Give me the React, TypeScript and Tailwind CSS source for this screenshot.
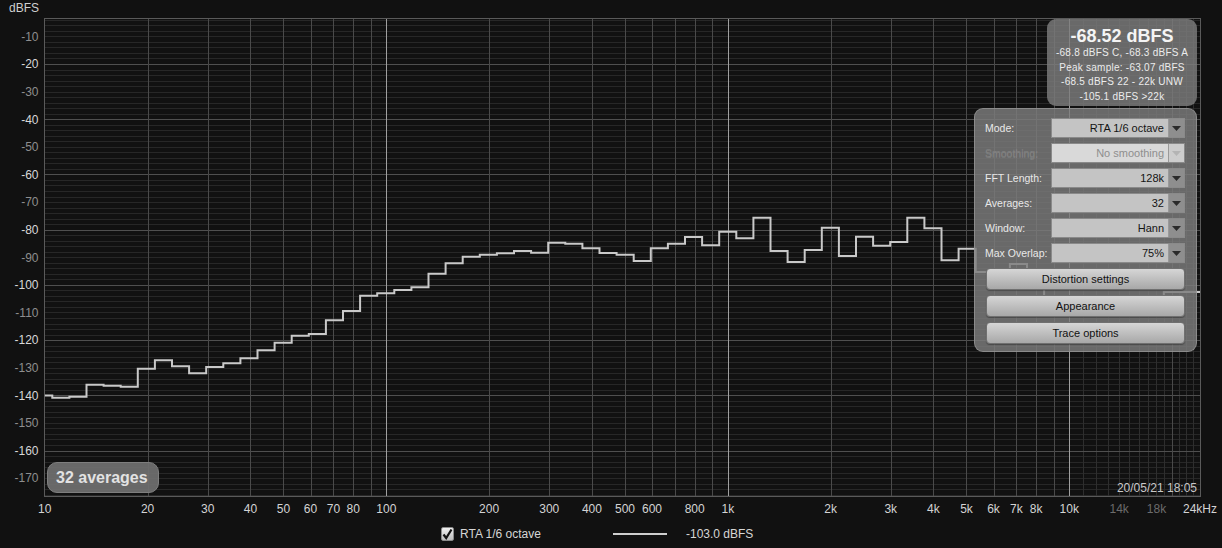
import React from "react";

const X0 = 44.8;
const DEC = 341.5;
const xf = (f: number) => X0 + DEC * Math.log10(f / 10);
const yd = (db: number) => 64 + (-20 - db) * 2.761;
const cr = (v: number) => Math.round(v) + 0.5;

const LEFT = 44.5;
const RIGHT = 1200.5;
const TOP = 18.5;
const BOTTOM = 496.5;

const bands = [
  395.5, 397.7, 396.7, 384.7, 385.7, 386.7, 368.7, 360.2, 366.3, 373.2, 367, 363.3, 358.3, 350.3, 342.7,
  335.7, 334, 320.3, 311, 295.7, 293.3, 290, 287.3, 273.7, 263.3, 256.7, 254.7, 253.3, 251, 252.7, 242.7,
  243.7, 248.3, 253, 254.7, 261, 248.3, 243.7, 237, 245.3, 231.7, 238.3, 217.7, 251, 262, 250, 227.7, 256,
  236.7, 245.7, 242, 217.7, 228.3, 260.3, 248.7, 272, 271, 264, 276, 298, 301, 299, 302, 300, 299, 301,
  292, 292, 292,
];

function tracePath() {
  const edges: number[] = [44.8];
  for (let i = 0; i < bands.length; i++) edges.push(Math.min(52.3 + 17.1 * i, 1200));
  let d = `M ${edges[0]} ${bands[0]}`;
  for (let i = 0; i < bands.length; i++) {
    d += ` H ${edges[i + 1].toFixed(1)}`;
    if (i + 1 < bands.length) d += ` V ${bands[i + 1]}`;
  }
  return d;
}

const mediumFreqs = [
  20, 30, 40, 50, 60, 70, 80, 90, 200, 300, 400, 500, 600, 700, 800, 900, 2000, 3000, 4000, 5000, 6000,
  7000, 8000, 9000, 20000,
];
const majorFreqs = [100, 1000, 10000];
const minorFreqs = [11000, 12000, 13000, 14000, 15000, 16000, 17000, 18000, 19000, 21000, 22000, 23000];

const xLabels: [number, string, boolean][] = [
  [10, "10", false],
  [20, "20", false],
  [30, "30", false],
  [40, "40", false],
  [50, "50", false],
  [60, "60", false],
  [70, "70", false],
  [80, "80", false],
  [100, "100", false],
  [200, "200", false],
  [300, "300", false],
  [400, "400", false],
  [500, "500", false],
  [600, "600", false],
  [800, "800", false],
  [1000, "1k", false],
  [2000, "2k", false],
  [3000, "3k", false],
  [4000, "4k", false],
  [5000, "5k", false],
  [6000, "6k", false],
  [7000, "7k", false],
  [8000, "8k", false],
  [10000, "10k", false],
  [14000, "14k", true],
  [18000, "18k", true],
];

function Chart() {
  const minorH: number[] = [];
  for (let db = -4; db >= -176; db -= 2) minorH.push(db);
  const majorH = [-20, -40, -60, -80, -100, -120, -140, -160];
  const yLabels: number[] = [];
  for (let db = -10; db >= -170; db -= 10) yLabels.push(db);

  return (
    <svg width={1222} height={520} className="block" shapeRendering="crispEdges">
      <defs>
        <clipPath id="plotclip">
          <rect x={LEFT} y={TOP} width={RIGHT - LEFT} height={BOTTOM - TOP} />
        </clipPath>
      </defs>
      {/* horizontal minor */}
      {minorH.map((db) => (
        <line key={"h" + db} x1={LEFT} x2={RIGHT} y1={cr(yd(db))} y2={cr(yd(db))} stroke="#272727" strokeWidth={1} />
      ))}
      {minorFreqs.map((f) => (
        <line key={"vm" + f} x1={cr(xf(f))} x2={cr(xf(f))} y1={TOP} y2={BOTTOM} stroke="#2e2e2e" strokeWidth={1} />
      ))}
      {majorH.map((db) => (
        <line key={"H" + db} x1={LEFT} x2={RIGHT} y1={cr(yd(db))} y2={cr(yd(db))} stroke="#4f4f4f" strokeWidth={1} />
      ))}
      {mediumFreqs.map((f) => (
        <line key={"v" + f} x1={cr(xf(f))} x2={cr(xf(f))} y1={TOP} y2={BOTTOM} stroke="#4a4a4a" strokeWidth={1} />
      ))}
      {majorFreqs.map((f) => (
        <line key={"V" + f} x1={cr(xf(f))} x2={cr(xf(f))} y1={TOP} y2={BOTTOM} stroke="#a0a0a0" strokeWidth={1} />
      ))}
      {/* frame */}
      <rect x={LEFT} y={TOP} width={RIGHT - LEFT} height={BOTTOM - TOP} fill="none" stroke="#5a5a5a" strokeWidth={1} />

      {/* trace */}
      <g clipPath="url(#plotclip)" shapeRendering="auto">
        <path d={tracePath()} fill="none" stroke="#c9c9c9" strokeWidth={2} strokeLinejoin="miter" />
      </g>

      {/* axis labels */}
      <g shapeRendering="auto" fontSize={12}>
        <text x={9} y={12} fill="#cfcfcf">
          dBFS
        </text>
        {yLabels.map((db) => (
          <text
            key={"yl" + db}
            x={38.5}
            y={yd(db) + 4.3}
            textAnchor="end"
            fill={db % 20 === 0 ? "#d8d8d8" : "#8e8e8e"}
          >
            {db}
          </text>
        ))}
        {xLabels.map(([f, t, dim]) => (
          <text key={"xl" + f} x={xf(f)} y={513} textAnchor="middle" fill={dim ? "#6c6c6c" : "#d4d4d4"}>
            {t}
          </text>
        ))}
        <text x={1183} y={513} fill="#d4d4d4">
          24kHz
        </text>
        <text x={1197} y={491.5} textAnchor="end" fill="#c8c8c8">
          20/05/21 18:05
        </text>
      </g>
    </svg>
  );
}

function Arrow({ disabled }: { disabled?: boolean }) {
  return (
    <svg width={9} height={5} viewBox="0 0 9 5">
      <polygon points="0,0 9,0 4.5,5" fill={disabled ? "#b4b4b4" : "#2a2a2a"} />
    </svg>
  );
}

function Field({ label, value, disabled }: { label: string; value: string; disabled?: boolean }) {
  return (
    <div className="flex items-center h-[20px]">
      <div
        className={
          "w-[66px] text-[10.5px] leading-none whitespace-nowrap " +
          (disabled ? "text-[#808080] [text-shadow:0_1px_0_rgba(255,255,255,0.15)]" : "text-[#e8e8e8]")
        }
      >
        {label}
      </div>
      <div
        className={
          "flex-1 h-[20px] flex border border-[#8a8a8a] " + (disabled ? "bg-[#d9d9d9]" : "bg-[#c4c4c4]")
        }
      >
        <div
          className={
            "flex-1 flex items-center justify-end pr-[4px] text-[11px] " +
            (disabled ? "text-[#8e8e8e]" : "text-[#141414]")
          }
        >
          {value}
        </div>
        <div
          className={
            "w-[16px] flex items-center justify-center border-l border-[#9a9a9a] " +
            (disabled ? "bg-[#cdcdcd]" : "bg-[#8e8e8e]")
          }
        >
          <Arrow disabled={disabled} />
        </div>
      </div>
    </div>
  );
}

function Btn({ children }: { children: React.ReactNode }) {
  return (
    <div className="h-[22px] w-[199px] ml-[1px] flex items-center justify-center rounded-[4px] border border-[#707070] bg-gradient-to-b from-[#d6d6d6] to-[#a8a8a8] text-[11px] text-[#111] shadow-[0_1px_1px_rgba(0,0,0,0.3)]">
      {children}
    </div>
  );
}

export default function App() {
  return (
    <div className="relative w-[1222px] h-[548px] overflow-hidden bg-[#111111] font-['Liberation_Sans',Arial,sans-serif] flex flex-col">
      <Chart />

      {/* legend */}
      <div className="h-[28px] flex items-center pl-[441px] text-[12px] text-[#d6d6d6]">
        <div className="w-[13px] h-[14px] rounded-[2px] border border-[#8a8a8a] bg-gradient-to-b from-[#f0f0f0] to-[#bdbdbd] flex items-center justify-center">
          <svg width={11} height={12} viewBox="0 0 11 12">
            <path d="M1.5 6.5 L4.2 10 L9.5 1.5" fill="none" stroke="#111" strokeWidth={2.2} />
          </svg>
        </div>
        <span className="ml-[6px] w-[153px]">RTA 1/6 octave</span>
        <div className="w-[54px] h-[2px] bg-[#cfcfcf]" />
        <span className="ml-[19px]">-103.0 dBFS</span>
      </div>

      {/* readout */}
      <div className="absolute left-[1047px] top-[19px] w-[150px] h-[87px] rounded-[9px] bg-[rgba(125,125,125,0.82)] flex flex-col items-center pt-[7px] text-[#ececec]">
        <div className="text-[18px] font-bold leading-[20px] text-[#f4f4f4]">-68.52 dBFS</div>
        <div className="text-[10px] leading-[14.7px] tracking-[0.25px]">-68.8 dBFS C, -68.3 dBFS A</div>
        <div className="text-[10px] leading-[14.7px] tracking-[0.25px]">Peak sample: -63.07 dBFS</div>
        <div className="text-[10px] leading-[14.7px] tracking-[0.25px]">-68.5 dBFS 22 - 22k UNW</div>
        <div className="text-[10px] leading-[14.7px] tracking-[0.25px]">-105.1 dBFS &gt;22k</div>
      </div>

      {/* settings panel */}
      <div className="absolute left-[974px] top-[108px] w-[223px] h-[244px] rounded-[9px] border border-[rgba(160,160,160,0.6)] bg-[rgba(125,125,125,0.82)] pt-[9px] pl-[10px] pr-[11px] flex flex-col gap-[5px]">
        <Field label="Mode:" value="RTA 1/6 octave" />
        <Field label="Smoothing:" value="No  smoothing" disabled />
        <Field label="FFT Length:" value="128k" />
        <Field label="Averages:" value="32" />
        <Field label="Window:" value="Hann" />
        <Field label="Max Overlap:" value="75%" />
        <Btn>Distortion settings</Btn>
        <Btn>Appearance</Btn>
        <Btn>Trace options</Btn>
      </div>

      {/* averages badge */}
      <div className="absolute left-[47px] top-[462px] w-[112px] h-[31px] rounded-[10px] border border-[#7e7e7e] bg-[rgba(110,110,110,0.95)] flex items-center pl-[8px] text-[16px] font-bold text-[#e2e2e2]">
        32 averages
      </div>
    </div>
  );
}
